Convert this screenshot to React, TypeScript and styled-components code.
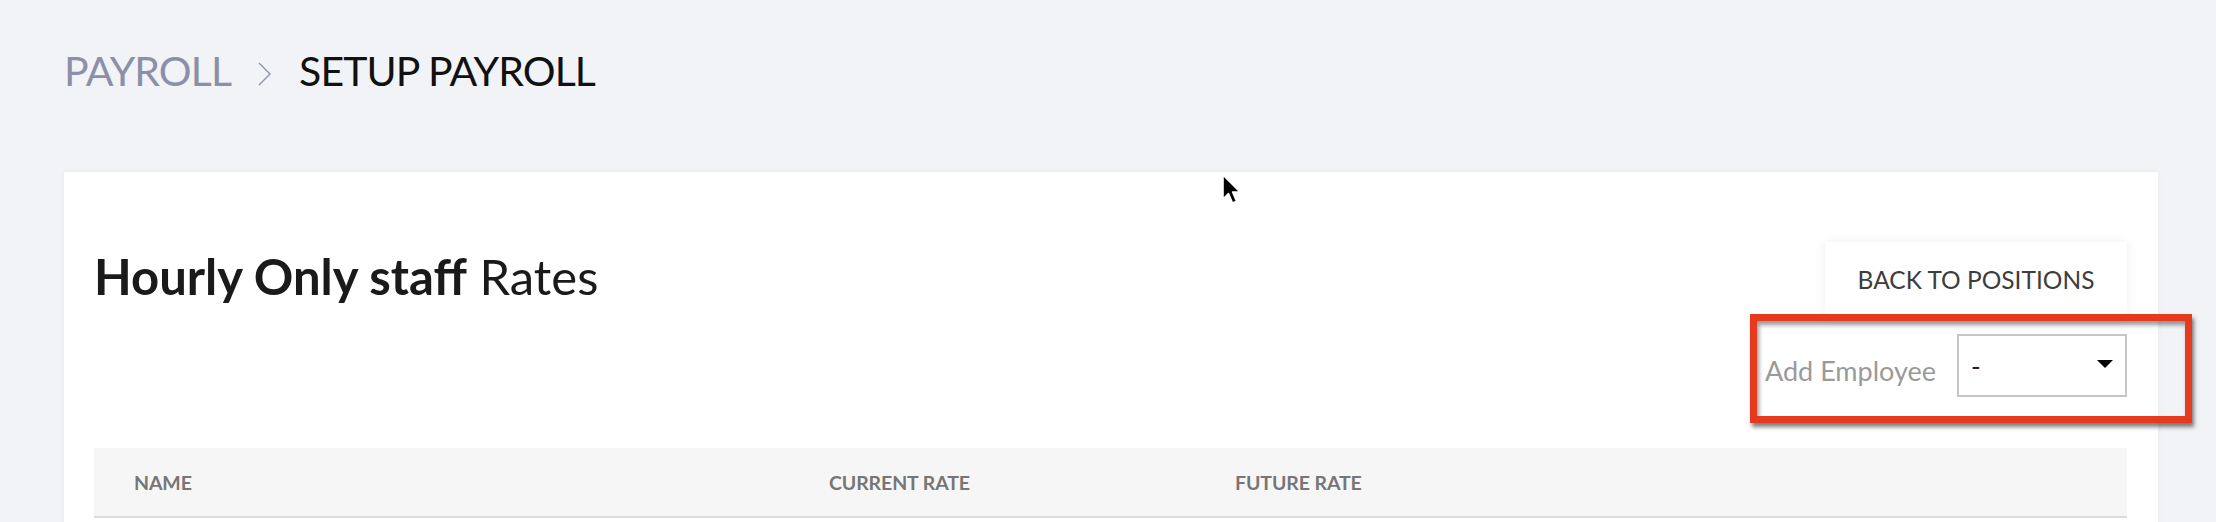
import styled, { createGlobalStyle } from 'styled-components'

const GlobalStyle = createGlobalStyle`
  html, body {
    margin: 0;
    padding: 0;
    background-color: #f2f3f7;
    font-family: Lato, "Open Sans", Arial, sans-serif;
  }
`

interface CrumbProps {
  muted?: boolean
}

const Page = styled.div`
  position: relative;
  min-height: 522px;
  padding: 47px 58px 0 64px;
  box-sizing: border-box;
`

const Breadcrumb = styled.nav`
  display: flex;
  align-items: center;
  height: 48px;
  margin-bottom: 77px;
`

const Crumb = styled.span<CrumbProps>`
  font-size: 41px;
  line-height: 48px;
  letter-spacing: -0.9px;
  color: ${props => props.muted ? '#8b90a8' : '#111111'};
`

const ChevronIcon = styled.svg`
  width: 13px;
  height: 24px;
  margin: 6px 28px 0 27px;
`

const Card = styled.section`
  background: #ffffff;
  box-shadow: 0 0 6px rgba(40, 50, 80, 0.05);
  padding: 70px 31px 120px 30px;
`

const CardHeader = styled.div`
  display: flex;
  justify-content: space-between;
  align-items: flex-start;
`

const Title = styled.h1`
  margin: 6px 0 0 0;
  font-size: 49px;
  line-height: 56px;
  font-weight: 400;
  color: #1a1a1a;
  strong {
    font-weight: 700;
  }
`

const Actions = styled.div`
  display: flex;
  flex-direction: column;
  align-items: flex-end;
  gap: 18px;
`

const BackButton = styled.button`
  width: 302px;
  height: 74px;
  padding: 0;
  border: none;
  background: #ffffff;
  box-shadow: 0 0 10px rgba(0, 0, 0, 0.07);
  font-family: inherit;
  font-size: 24.5px;
  color: #3d3d3d;
  cursor: pointer;
`

const AddRow = styled.div`
  display: flex;
  align-items: center;
  gap: 21px;
`

const Label = styled.span`
  font-size: 27px;
  color: #9a9a9a;
  margin-top: 10px;
`

const Select = styled.div`
  width: 170px;
  height: 63px;
  box-sizing: border-box;
  border: 2px solid #c6c6c6;
  display: flex;
  align-items: center;
  justify-content: space-between;
  padding: 0 12px 0 12px;
  font-size: 26px;
  color: #222;
`

const Caret = styled.span`
  width: 0;
  height: 0;
  border-left: 8px solid transparent;
  border-right: 8px solid transparent;
  border-top: 8px solid #000;
  margin-top: -4px;
`

const Table = styled.div`
  margin-top: 51px;
`

const HeadRow = styled.div`
  display: grid;
  grid-template-columns: 695px 406px 1fr;
  align-items: center;
  height: 68px;
  padding-left: 40px;
  background: #f6f6f6;
  border-bottom: 2px solid #dcdcdc;
`

const HeadCell = styled.span`
  font-size: 19.5px;
  font-weight: 700;
  color: #767676;
  letter-spacing: -0.1px;
`

const Annotation = styled.div`
  position: absolute;
  left: 1750px;
  top: 314px;
  width: 442px;
  height: 109px;
  box-sizing: border-box;
  border: 7px solid #e63a1e;
  box-shadow: 2px 4px 4px rgba(0, 0, 0, 0.5), inset 2px 4px 4px rgba(0, 0, 0, 0.4);
  pointer-events: none;
`

const Cursor = styled.svg`
  position: absolute;
  left: 1220px;
  top: 172px;
  width: 22px;
  height: 34px;
`

const App: React.FC = () => {
  return (
    <>
      <GlobalStyle />
      <Page>
        <Breadcrumb>
          <Crumb muted>PAYROLL</Crumb>
          <ChevronIcon viewBox='0 0 13 24'>
            <polyline points='1,1 12,12 1,23' fill='none' stroke='#8d93a8' strokeWidth='1.4' />
          </ChevronIcon>
          <Crumb>SETUP PAYROLL</Crumb>
        </Breadcrumb>
        <Card>
          <CardHeader>
            <Title><strong>Hourly Only staff</strong> Rates</Title>
            <Actions>
              <BackButton>BACK TO POSITIONS</BackButton>
              <AddRow>
                <Label>Add Employee</Label>
                <Select>
                  <span>-</span>
                  <Caret />
                </Select>
              </AddRow>
            </Actions>
          </CardHeader>
          <Table>
            <HeadRow>
              <HeadCell>NAME</HeadCell>
              <HeadCell>CURRENT RATE</HeadCell>
              <HeadCell>FUTURE RATE</HeadCell>
            </HeadRow>
          </Table>
        </Card>
        <Annotation />
        <Cursor viewBox='0 0 22 34'>
          <path
            d='M3 3 L3 27 L8.5 21.5 L12.5 31 L16.5 29.3 L12.6 20 L20 20 Z'
            fill='#000'
            stroke='#fff'
            strokeWidth='1.6'
            strokeLinejoin='round'
          />
        </Cursor>
      </Page>
    </>
  )
}

export default App
